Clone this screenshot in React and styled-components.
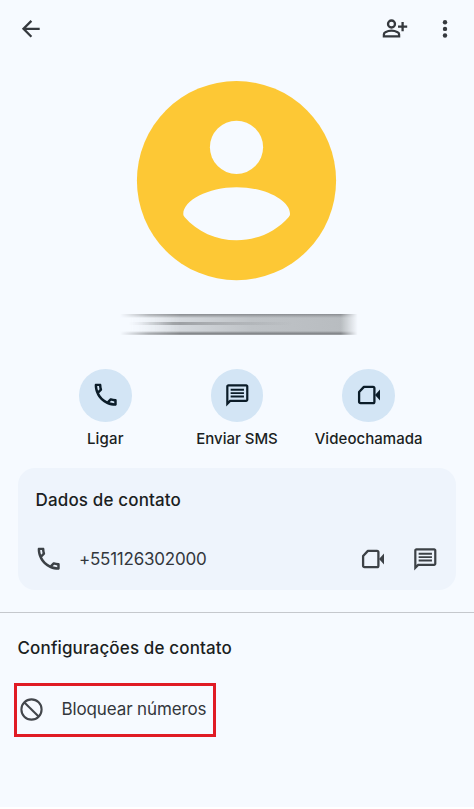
import React from "react";
import styled, { createGlobalStyle } from "styled-components";

const GlobalStyle = createGlobalStyle`
  * { box-sizing: border-box; }
  body { margin: 0; background: #fff; font-family: Inter, Roboto, sans-serif; }
`;

const Screen = styled.main`
  display: flex;
  flex-direction: column;
  width: 474px;
  height: 807px;
  background: #f6faff;
  overflow: hidden;
`;

const TopBar = styled.header`
  display: flex;
  align-items: center;
  height: 57px;
  padding: 0 21px 0 17px;
  color: #35393e;
`;

const Spacer = styled.span`
  flex: 1;
`;

const IconButton = styled.button`
  display: flex;
  flex: none;
  padding: 0;
  border: 0;
  background: none;
  color: inherit;
  margin-left: ${(p) => p.$gap || 0}px;
`;

const Svg = styled.svg`
  display: block;
  flex: none;
  overflow: visible;
`;

const Profile = styled.section`
  display: flex;
  flex-direction: column;
  align-items: center;
  padding-top: 24px;
  height: 312px;
`;

const HiddenName = styled.div`
  width: 240px;
  height: 21px;
  margin: 33px 0 0 5px;
  background:
    linear-gradient(90deg, transparent 3%, #9a9da1 22%, transparent 72%) 0 8px / 100% 3px no-repeat,
    linear-gradient(180deg, #888b90 0, #a5a8ac 2px, transparent 4px, transparent 17px, #8b8e92 19px, #7f8286 20px, #b5b8bc 21px),
    linear-gradient(90deg, transparent 4%, #d5d9de 24%, #bfc3c7 55%, #b7bbbf 100%);
  mask-image: linear-gradient(90deg, transparent 0, #000a 12%, #000 25%, #000 92%, transparent 99%);
`;

const Actions = styled.nav`
  display: grid;
  grid-template-columns: repeat(3, 131.7px);
  justify-content: center;
  height: 99px;
`;

const Action = styled.div`
  display: flex;
  flex-direction: column;
  align-items: center;
  color: #0b1c28;
`;

const ActionCircle = styled.div`
  display: grid;
  place-items: center;
  width: 52.6px;
  height: 52.6px;
  padding-bottom: 1px;
  border-radius: 50%;
  background: #d3e5f5;
`;

const ActionLabel = styled.span`
  margin-top: 7px;
  font-size: 15px;
  line-height: 20px;
  font-weight: 450;
  color: #1b1f23;
  white-space: nowrap;
  letter-spacing: ${(p) => p.$tracking}px;
`;

const Card = styled.section`
  margin: 0 18px;
  height: 122px;
  padding: 20px 17px 0 17.5px;
  border-radius: 17px;
  background: #eef4fc;
`;

const Heading = styled.h2`
  margin: 0;
  font-size: 17px;
  line-height: 24px;
  font-weight: 450;
  color: #1b1e22;
  white-space: nowrap;
  letter-spacing: ${(p) => p.$tracking}px;
`;

const PhoneRow = styled.div`
  display: flex;
  align-items: center;
  height: 30px;
  margin: 32px 0 0 -2px;
  color: #3c4146;
`;

const RowText = styled.span`
  margin-left: ${(p) => p.$gap}px;
  font-size: 17px;
  line-height: 24px;
  font-weight: 380;
  color: #33373c;
  white-space: nowrap;
  letter-spacing: ${(p) => p.$tracking}px;
`;

const Settings = styled.section`
  margin-top: 22px;
  padding: 23px 14px 0;
  border-top: 1px solid #c5c8cd;
`;

const SettingsHeading = styled(Heading)`
  margin-left: 3.5px;
`;

const BlockRow = styled.div`
  display: flex;
  align-items: center;
  width: 202px;
  height: 54px;
  margin-top: 23px;
  padding: 0 0 2px 2.5px;
  border: 3px solid #e01b24;
  color: #43474c;
`;

const BackIcon = () => (
  <Svg width="28" height="28" viewBox="0 0 28 28" fill="none" stroke="currentColor" strokeWidth="2.3">
    <path d="M22.7 13.8H7M14.4 5.9 6.5 13.8l7.9 7.9" />
  </Svg>
);

const PersonAddIcon = () => (
  <Svg width="26" height="20" viewBox="0 0 26 20" fill="none" stroke="currentColor" strokeWidth="2.3">
    <circle cx="9.5" cy="5" r="3.5" />
    <path d="M1.9 17.4v-2c0-1 .5-1.7 1.4-2.1 3.8-2 8.6-2 12.4 0 .9.4 1.4 1.1 1.4 2.1v2zM20.6 3v9.2M16 7.6h9.2" />
  </Svg>
);

const MoreIcon = () => (
  <Svg width="16" height="20" viewBox="0 0 16 20" fill="currentColor">
    <circle cx="8" cy="3.3" r="2.2" />
    <circle cx="8" cy="9.9" r="2.2" />
    <circle cx="8" cy="16.5" r="2.2" />
  </Svg>
);

const Avatar = () => (
  <Svg width="200" height="200" viewBox="0 0 200 200">
    <circle cx="99.5" cy="99.6" r="99.6" fill="#fdc835" />
    <circle cx="99.5" cy="66.3" r="26.6" fill="#f6faff" />
    <path
      d="M46.3 132.8C46.3 119.5 71 106.2 99.6 106.2S153 119.5 153 132.8c0 1.3-.3 2-1.2 3.1C139 150.5 120 159.3 99.6 159.3S60 150.5 47.5 135.9c-.9-1.1-1.2-1.8-1.2-3.1z"
      fill="#f6faff"
    />
  </Svg>
);

const CallIcon = () => (
  <Svg width="29.4" height="29.4" viewBox="0 0 24 24" fill="currentColor">
    <path d="M6.54 5c.06.89.21 1.76.45 2.59l-1.2 1.2c-.41-1.2-.67-2.47-.76-3.79h1.51m9.86 12.02c.85.24 1.72.39 2.6.45v1.49c-1.32-.09-2.59-.35-3.8-.75l1.2-1.19M7.5 3H4c-.55 0-1 .45-1 1 0 9.39 7.61 17 17 17 .55 0 1-.45 1-1v-3.49c0-.55-.45-1-1-1-1.24 0-2.45-.2-3.57-.57-.1-.04-.21-.05-.31-.05-.26 0-.51.1-.71.29l-2.2 2.2c-2.83-1.45-5.15-3.76-6.59-6.59l2.2-2.2c.28-.28.36-.67.25-1.02C8.7 6.45 8.5 5.25 8.5 4c0-.55-.45-1-1-1z" />
  </Svg>
);

const ChatIcon = () => (
  <Svg width="26.6" height="26.6" viewBox="0 0 24 24" fill="currentColor">
    <path d="M4 4h16v12H5.17L4 17.17V4m0-2c-1.1 0-2 .9-2 2v18l4-4h14c1.1 0 2-.9 2-2V4c0-1.1-.9-2-2-2zM6 12.2h12v1.7H6zm0-3.05h12v1.7H6zM6 6.1h12v1.7H6z" />
  </Svg>
);

const VideoIcon = () => (
  <Svg width="24" height="20" viewBox="0 0 24 20" fill="none" stroke="currentColor" strokeWidth="2.3" strokeLinejoin="round">
    <path d="M6.9 1.9h9.1c.8 0 1.4.6 1.4 1.4v13.4c0 .8-.6 1.4-1.4 1.4H3.5c-.8 0-1.4-.6-1.4-1.4V7z" />
    <path d="m18 10 5-5.5v11z" fill="currentColor" stroke="none" />
  </Svg>
);

const BlockIcon = () => (
  <Svg width="23" height="23" viewBox="0 0 23 23" fill="none" stroke="currentColor" strokeWidth="2.1">
    <circle cx="11.5" cy="11.5" r="10.1" />
    <path d="m4.4 4.4 14.2 14.2" />
  </Svg>
);

const actions = [
  { label: "Ligar", icon: CallIcon, tracking: 0.2 },
  { label: "Enviar SMS", icon: ChatIcon, tracking: 0 },
  { label: "Videochamada", icon: VideoIcon, tracking: 0.05 },
];

export default function App() {
  return (
    <>
      <GlobalStyle />
      <Screen>
        <TopBar>
          <IconButton aria-label="Voltar"><BackIcon /></IconButton>
          <Spacer />
          <IconButton aria-label="Adicionar contato"><PersonAddIcon /></IconButton>
          <IconButton aria-label="Mais opções" $gap={29}><MoreIcon /></IconButton>
        </TopBar>
        <Profile>
          <Avatar />
          <HiddenName />
        </Profile>
        <Actions>
          {actions.map(({ label, icon: Icon, tracking }) => (
            <Action key={label}>
              <ActionCircle><Icon /></ActionCircle>
              <ActionLabel $tracking={tracking}>{label}</ActionLabel>
            </Action>
          ))}
        </Actions>
        <Card>
          <Heading $tracking={0.15}>Dados de contato</Heading>
          <PhoneRow>
            <CallIcon />
            <RowText $gap={16} $tracking={-0.22}>+551126302000</RowText>
            <Spacer />
            <IconButton aria-label="Videochamada"><VideoIcon /></IconButton>
            <IconButton aria-label="Enviar SMS" $gap={27}><ChatIcon /></IconButton>
          </PhoneRow>
        </Card>
        <Settings>
          <SettingsHeading $tracking={0.14}>Configurações de contato</SettingsHeading>
          <BlockRow>
            <BlockIcon />
            <RowText $gap={19} $tracking={-0.12}>Bloquear números</RowText>
          </BlockRow>
        </Settings>
      </Screen>
    </>
  );
}
